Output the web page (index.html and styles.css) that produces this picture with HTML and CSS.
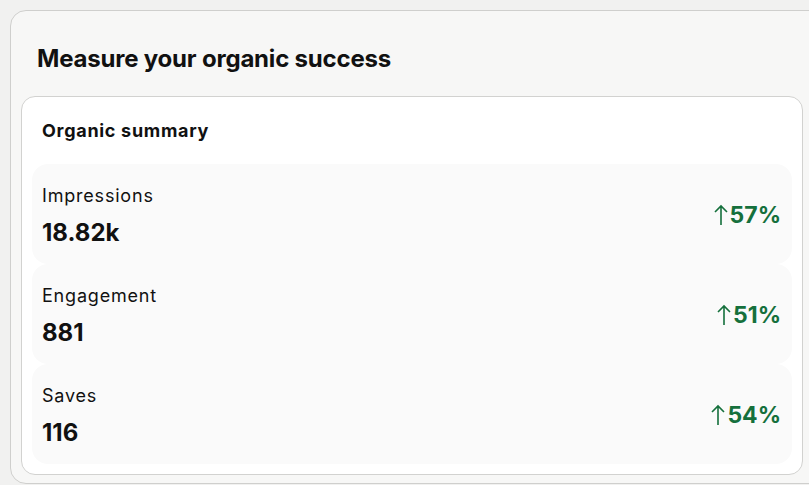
FILE: index.html
```html
<!DOCTYPE html>
<html lang="en">
<head>
<meta charset="utf-8">
<title>Organic summary</title>
<link rel="stylesheet" href="styles.css">
</head>
<body>
<section class="outer">
  <h1 class="title">Measure your organic success</h1>
  <div class="inner">
    <h2 class="subtitle">Organic summary</h2>
    <div class="rows">
      <div class="row">
        <div class="metric">
          <div class="label">Impressions</div>
          <div class="value">18.82k</div>
        </div>
        <div class="change">
          <svg class="arrow" viewBox="0 0 14 22" width="14" height="22"><path d="M7 21V2M1 8L7 2L13 8" fill="none" stroke="currentColor" stroke-width="1.6"/></svg>
          <span>57%</span>
        </div>
      </div>
      <div class="row">
        <div class="metric">
          <div class="label">Engagement</div>
          <div class="value">881</div>
        </div>
        <div class="change">
          <svg class="arrow" viewBox="0 0 14 22" width="14" height="22"><path d="M7 21V2M1 8L7 2L13 8" fill="none" stroke="currentColor" stroke-width="1.6"/></svg>
          <span>51%</span>
        </div>
      </div>
      <div class="row">
        <div class="metric">
          <div class="label">Saves</div>
          <div class="value">116</div>
        </div>
        <div class="change">
          <svg class="arrow" viewBox="0 0 14 22" width="14" height="22"><path d="M7 21V2M1 8L7 2L13 8" fill="none" stroke="currentColor" stroke-width="1.6"/></svg>
          <span>54%</span>
        </div>
      </div>
    </div>
  </div>
</section>
</body>
</html>
```

FILE: styles.css
```css
html, body {
  margin: 0;
  padding: 0;
}
body {
  background: #f1f1f0;
  font-family: Inter, "Liberation Sans", Arial, sans-serif;
  color: #111111;
  overflow: hidden;
  height: 485px;
}
.outer {
  margin: 10px 0 0 10px;
  width: 820px;
  box-sizing: border-box;
  background: #f7f7f6;
  border: 1px solid #cfcfcd;
  border-radius: 16px;
  padding: 33px 0 8px 10px;
}
.title {
  margin: 0 0 22px 16px;
  font-size: 24px;
  line-height: 30px;
  font-weight: 700;
  letter-spacing: -0.2px;
  color: #111;
}
.inner {
  width: 782px;
  box-sizing: border-box;
  background: #ffffff;
  border: 1px solid #d2d2d0;
  border-radius: 14px;
  padding: 23px 10px 10px 10px;
}
.subtitle {
  margin: 0 0 22px 10px;
  font-size: 18px;
  line-height: 22px;
  font-weight: 700;
  letter-spacing: 0.7px;
  color: #111;
}
.rows {
  display: flex;
  flex-direction: column;
  gap: 0;
}
.row {
  height: 100px;
  box-sizing: border-box;
  background: #fafafa;
  border-radius: 16px;
  display: flex;
  align-items: center;
  justify-content: space-between;
  padding: 4px 11px 0 10px;
}
.label {
  font-size: 18px;
  line-height: 22px;
  font-weight: 400;
  letter-spacing: 0.8px;
  color: #111;
}
.value {
  margin-top: 12px;
  font-size: 24px;
  line-height: 28px;
  font-weight: 700;
  color: #111;
}
.change {
  display: flex;
  align-items: center;
  gap: 2px;
  color: #15703c;
  font-size: 23px;
  font-weight: 700;
  margin-top: -2px;
}
.arrow {
  display: block;
}
```
